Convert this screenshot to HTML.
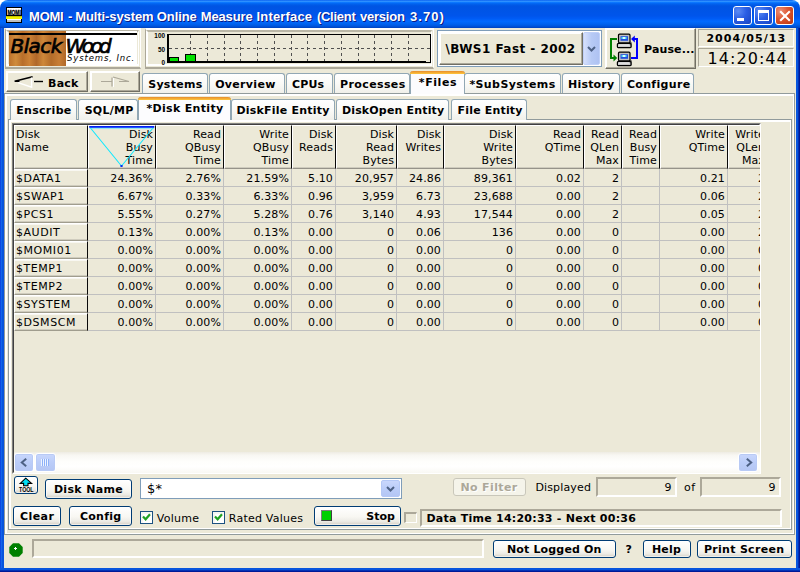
<!DOCTYPE html>
<html><head><meta charset="utf-8"><title>MOMI</title>
<style>
*{box-sizing:border-box;margin:0;padding:0}
html,body{width:800px;height:572px;overflow:hidden;background:#ECE9D8}
body{position:relative;font-family:"DejaVu Sans", "Liberation Sans", sans-serif;font-size:11px;color:#000;line-height:13px}
.a{position:absolute}
.t{position:absolute;white-space:nowrap;line-height:14px;z-index:3}
.b{font-weight:bold}
.btn{position:absolute;border:1px solid #003C74;border-radius:3px;background:linear-gradient(#fff 0%,#F8F7F2 55%,#ECEBE5 80%,#D6D0C5 100%);box-shadow:inset 0 0 0 1px rgba(255,255,255,.6)}
.cbtn{position:absolute;border:1px solid;border-color:#fff #716F64 #716F64 #fff;box-shadow:inset -1px -1px 0 #ACA899,inset 1px 1px 0 #fff;background:#ECE9D8}
.sunk{position:absolute;border:2px solid;border-color:#ACA899 #fff #fff #ACA899;background:#ECE9D8}
.fr{position:absolute;border:1px solid;border-color:#C5C2B2 #ACA899 #ACA899 #C5C2B2;box-shadow:inset 2px 2px 0 #fff,inset -1px -1px 0 #fff}
.tab{position:absolute;border:1px solid #91A7B4;border-bottom:none;border-radius:3px 3px 0 0;background:linear-gradient(#FFFFFF,#FAFAF7 50%,#F0F0EA)}
.tab.sel{background:#FCFCFE;border-top:none;z-index:2}
.tab.sel:before{content:"";position:absolute;left:-1px;right:-1px;top:0;height:3px;background:linear-gradient(#E68B2C,#FFC73C);border-radius:3px 3px 0 0}
.panel{position:absolute;border:1px solid;border-color:#919B9C;box-shadow:inset 2px 2px 0 #fff,inset -1px -1px 0 #fff;background:#ECE9D8}
.hc{position:absolute;top:125px;height:44px;border:1px solid;border-color:#fff #0A0A0A #96938A #fff;box-shadow:inset 0 -1px 0 #CFCCBE;background:#ECE9D8;text-align:right;padding:2px 2px 0 2px;line-height:13px;overflow:hidden;white-space:nowrap;letter-spacing:0.12px}
.rc{position:absolute;height:18px;border-right:1px solid #C0C0C0;border-bottom:1px solid #C0C0C0;text-align:right;padding:3px 2px 0 0;white-space:nowrap;overflow:hidden;letter-spacing:0.12px}
.fc{position:absolute;left:14px;width:74px;height:18px;border:1px solid;border-color:#fff #0A0A0A #A09D8E #fff;box-shadow:inset 0 1px 0 #F8F7F1,inset 0 -1px 0 #CFCCBE;padding:2px 0 0 1px;white-space:nowrap;letter-spacing:0.55px}
</style></head>
<body>
<div class="a" style="left:0;top:0;width:800px;height:10px;background:#fff"></div>
<div class="a" style="left:0;top:0;width:800px;height:28px;background:linear-gradient(#0058ee 0%,#3593ff 4%,#288eff 6%,#127dff 8%,#036ffc 10%,#0262ee 14%,#0057e5 20%,#0054e3 24%,#0055eb 56%,#005bf5 66%,#026afe 76%,#0062ef 86%,#0058E0 92%,#004CD0 97%,#0040B8 100%);border-radius:8px 8px 0 0"></div>
<div class="a" style="left:0;top:28px;width:4px;height:544px;background:linear-gradient(90deg,#0831D9,#166AEE 30%,#0855DD 60%,#0855DD)"></div>
<div class="a" style="left:796px;top:28px;width:4px;height:544px;background:linear-gradient(90deg,#0855DD,#0855DD 40%,#001EA0 75%,#00138C)"></div>
<div class="a" style="left:0;top:568px;width:800px;height:4px;background:linear-gradient(#0855DD,#0855DD 40%,#001EA0 75%,#00138C)"></div>
<svg class="a" style="left:6px;top:7px" width="17" height="17" viewBox="0 0 17 17"><rect x="0" y="0" width="16" height="16" fill="#000"/><rect x="1" y="1" width="14" height="7" fill="#fff"/><rect x="0" y="9" width="16" height="3" fill="#F0F000"/><path d="M0 9.6l1-.8 1 .8 1-.8 1 .8 1-.8 1 .8 1-.8 1 .8 1-.8 1 .8 1-.8 1 .8 1-.8 1 .8 1-.8 1 .8V8.5H0Z" fill="#000"/><rect x="1" y="12" width="14" height="3" fill="#C0C0C0"/><rect x="1" y="12" width="14" height="1" fill="#fff"/><text transform="translate(1.4 7.8) scale(0.65 1)" font-size="7.6" font-weight="bold" font-family="Liberation Sans,sans-serif" stroke="#000" stroke-width="0.3">MOMI</text></svg>
<div class="t" style="left:29.1px;top:9.1px;font-size:13px;letter-spacing:-0.271px;line-height:16px;font-weight:bold;font-family:Liberation Sans,sans-serif;color:#fff;text-shadow:1px 1px 0 #0A1883;">MOMI</div>
<div class="t" style="left:68.0px;top:9.1px;font-size:13px;letter-spacing:0.57px;line-height:16px;font-weight:bold;font-family:Liberation Sans,sans-serif;color:#fff;text-shadow:1px 1px 0 #0A1883;">-</div>
<div class="t" style="left:75.3px;top:9.1px;font-size:13px;letter-spacing:-0.105px;line-height:16px;font-weight:bold;font-family:Liberation Sans,sans-serif;color:#fff;text-shadow:1px 1px 0 #0A1883;">Multi-system</div>
<div class="t" style="left:156.8px;top:9.1px;font-size:13px;letter-spacing:-0.091px;line-height:16px;font-weight:bold;font-family:Liberation Sans,sans-serif;color:#fff;text-shadow:1px 1px 0 #0A1883;">Online</div>
<div class="t" style="left:200.7px;top:9.1px;font-size:13px;letter-spacing:-0.136px;line-height:16px;font-weight:bold;font-family:Liberation Sans,sans-serif;color:#fff;text-shadow:1px 1px 0 #0A1883;">Measure</div>
<div class="t" style="left:256.6px;top:9.1px;font-size:13px;letter-spacing:0.156px;line-height:16px;font-weight:bold;font-family:Liberation Sans,sans-serif;color:#fff;text-shadow:1px 1px 0 #0A1883;">Interface</div>
<div class="t" style="left:316.9px;top:9.1px;font-size:13px;letter-spacing:-0.263px;line-height:16px;font-weight:bold;font-family:Liberation Sans,sans-serif;color:#fff;text-shadow:1px 1px 0 #0A1883;">(Client</div>
<div class="t" style="left:360.0px;top:9.1px;font-size:13px;letter-spacing:-0.235px;line-height:16px;font-weight:bold;font-family:Liberation Sans,sans-serif;color:#fff;text-shadow:1px 1px 0 #0A1883;">version</div>
<div class="t" style="left:410.0px;top:9.1px;font-size:13px;letter-spacing:1.074px;line-height:16px;font-weight:bold;font-family:Liberation Sans,sans-serif;color:#fff;text-shadow:1px 1px 0 #0A1883;">3.70)</div>
<div class="a" style="left:733px;top:6px;width:19px;height:19px;border:1px solid #fff;border-radius:3px;background:radial-gradient(circle at 25% 25%,#5C8CF4,#2A5EE4 45%,#1A46C4 95%)"></div>
<div class="a" style="left:754px;top:6px;width:19px;height:19px;border:1px solid #fff;border-radius:3px;background:radial-gradient(circle at 25% 25%,#5C8CF4,#2A5EE4 45%,#1A46C4 95%)"></div>
<div class="a" style="left:775px;top:6px;width:19px;height:19px;border:1px solid #fff;border-radius:3px;background:radial-gradient(circle at 25% 25%,#EC9078,#DC5430 45%,#BE3812 95%)"></div>
<div class="a" style="left:737px;top:18px;width:7px;height:3px;background:#fff"></div>
<div class="a" style="left:757.5px;top:9.5px;width:11.5px;height:11px;border:1px solid #fff;border-top-width:3px"></div>
<svg class="a" style="left:778.5px;top:9.5px" width="12" height="12" viewBox="0 0 12 12"><path d="M1.2 1.2L10.8 10.8M10.8 1.2L1.2 10.8" stroke="#fff" stroke-width="2.1"/></svg>
<div class="a" style="left:5px;top:28px;width:136px;height:41px;border-style:solid;border-width:2px 1px 2px 1px;border-color:#fff #fff #ACA899 #ACA899"></div>
<div class="a" style="left:6px;top:30px;width:133px;height:36px;border-style:solid;border-width:2px 1px 2px 2px;border-color:#B9B6A6 #fff #fff #fff"></div>
<div class="a" style="left:9px;top:31px;width:128px;height:35px;background:#fff"></div>
<div class="a" style="left:9px;top:31px;width:57px;height:35px;background:linear-gradient(90deg,#BC722C,#D08C3C 12%,#B86E2A 24%,#CC8236 36%,#B0682A 48%,#CE883A 60%,#B46C2A 74%,#C87E36 88%,#B06828)"></div>
<div class="a" style="left:9px;top:33px;width:128px;height:2px;background:#000"></div>
<div class="t" style="left:10.5px;top:34.5px;font-size:20px;line-height:22px;font-style:italic;letter-spacing:-0.582px;-webkit-text-stroke:0.7px #000">Black</div>
<div class="t" style="left:65.5px;top:34.5px;font-size:20px;line-height:22px;font-style:italic;letter-spacing:-3.561px;-webkit-text-stroke:0.7px #000">Wood</div>
<div class="t" style="left:67px;top:52px;font-size:8.5px;line-height:12px;font-style:italic;letter-spacing:0.877px">Systems, Inc.</div>
<div class="a" style="left:145px;top:28px;width:289px;height:41px;border-style:solid;border-width:2px 1px 2px 1px;border-color:#fff #fff #ACA899 #ACA899"></div>
<div class="a" style="left:146px;top:30px;width:286px;height:36px;border-style:solid;border-width:2px 1px 2px 2px;border-color:#B9B6A6 #fff #fff #fff"></div>
<svg class="a" style="left:148px;top:31px" width="284" height="36" viewBox="0 0 284 36" font-family="Liberation Sans,sans-serif"><g stroke="#505050" stroke-width="1" stroke-dasharray="3 3"><line x1="42.5" y1="4" x2="42.5" y2="31"/><line x1="59.5" y1="4" x2="59.5" y2="31"/><line x1="76.5" y1="4" x2="76.5" y2="31"/><line x1="92.5" y1="4" x2="92.5" y2="31"/><line x1="109.5" y1="4" x2="109.5" y2="31"/><line x1="126.5" y1="4" x2="126.5" y2="31"/><line x1="143.5" y1="4" x2="143.5" y2="31"/><line x1="159.5" y1="4" x2="159.5" y2="31"/><line x1="176.5" y1="4" x2="176.5" y2="31"/><line x1="193.5" y1="4" x2="193.5" y2="31"/><line x1="210.5" y1="4" x2="210.5" y2="31"/><line x1="226.5" y1="4" x2="226.5" y2="31"/><line x1="243.5" y1="4" x2="243.5" y2="31"/><line x1="260.5" y1="4" x2="260.5" y2="31"/><line x1="21" y1="17.5" x2="282" y2="17.5"/></g><rect x="20.5" y="3.5" width="262" height="28" fill="none" stroke="#000" stroke-width="1"/><rect x="19" y="3" width="2" height="29" fill="#000"/><rect x="19" y="30" width="259" height="2" fill="#000"/><rect x="21.5" y="26.5" width="9" height="4" fill="#00E000" stroke="#000" stroke-width="1"/><rect x="37.5" y="23.5" width="10" height="7" fill="#00E000" stroke="#000" stroke-width="1"/><g font-size="7.6" font-weight="bold" text-anchor="end" transform="translate(17 0) scale(0.84 1)"><text x="0" y="6.9">100</text><text x="0" y="20.7">50</text><text x="0" y="34.4">0</text></g></svg>
<div class="a" style="left:437px;top:30px;width:165px;height:37px;border:1px solid #7F9DB9;background:#fff"></div>
<div class="cbtn" style="left:439px;top:32px;width:144px;height:33px"></div>
<div class="t" style="left:445.4px;top:41.3px;font-size:12px;letter-spacing:0.454px;line-height:16px;font-weight:bold;">\BWS1 Fast - 2002</div>
<div class="a" style="left:583px;top:32px;width:17px;height:33px;border-radius:2px;background:linear-gradient(90deg,#D6E0FC,#B7CAF5 50%,#AEC2F2);border:1px solid #C0D0F8"></div>
<svg class="a" style="left:586.5px;top:46px" width="9" height="7" viewBox="0 0 9 7"><path d="M1 1L4.5 4.5L8 1" fill="none" stroke="#4D6185" stroke-width="2"/></svg>
<div class="cbtn" style="left:605px;top:28px;width:91px;height:41px"></div>
<div class="t" style="left:644.1px;top:43.2px;font-size:11px;letter-spacing:0.104px;line-height:14px;font-weight:bold;">Pause...</div>
<svg class="a" style="left:608px;top:33px" width="34" height="36" viewBox="0 0 34 36"><path d="M9 6H3V25H6" fill="none" stroke="#008000" stroke-width="2"/><path d="M5.5 21.5L9.3 25L5.5 28.5Z" fill="#008000"/><path d="M26 6H29V25H23" fill="none" stroke="#0000FF" stroke-width="2"/><path d="M26.8 2.5L23 6L26.8 9.5Z" fill="#0000FF"/><rect x="10.5" y="1.2" width="11.5" height="8.6" rx="1" fill="#C0C0C0" stroke="#000" stroke-width="1.2"/><rect x="12.5" y="3.2" width="7.5" height="4.6" fill="#2050E0"/><rect x="13.5" y="4" width="5" height="2" fill="#60E8F0"/><rect x="15" y="4.2" width="2" height="1.6" fill="#fff"/><path d="M22 8 L23.6 9.5 V14.6 H22Z" fill="#404040"/><rect x="9.4" y="10.6" width="13.6" height="4" rx="0.8" fill="#C8C8C8" stroke="#000" stroke-width="1.2"/><rect x="10.5" y="11.4" width="11" height="1" fill="#fff"/><rect x="10.5" y="19.2" width="11.5" height="8.6" rx="1" fill="#C0C0C0" stroke="#000" stroke-width="1.2"/><rect x="12.5" y="21.2" width="7.5" height="4.6" fill="#2050E0"/><rect x="13.5" y="22" width="5" height="2" fill="#60E8F0"/><rect x="15" y="22.2" width="2" height="1.6" fill="#fff"/><path d="M22 26 L23.6 27.5 V32.6 H22Z" fill="#404040"/><rect x="9.4" y="28.6" width="13.6" height="4" rx="0.8" fill="#C8C8C8" stroke="#000" stroke-width="1.2"/><rect x="10.5" y="29.4" width="11" height="1" fill="#fff"/></svg>
<div class="sunk" style="left:698px;top:29px;width:96px;height:18px;border-width:1px"></div>
<div class="t" style="left:706.4px;top:32.2px;font-size:11px;letter-spacing:1.064px;line-height:14px;font-weight:bold;">2004/05/13</div>
<div class="sunk" style="left:698px;top:48px;width:96px;height:19px;border-width:1px"></div>
<div class="t" style="left:707.5px;top:48.5px;font-size:16px;letter-spacing:1.055px;line-height:20px;">14:20:44</div>
<div class="cbtn" style="left:6px;top:71px;width:82px;height:21px"></div>
<svg class="a" style="left:14px;top:75px" width="30" height="14" viewBox="0 0 30 14"><path d="M0.6 6.2L18.6 1.8M0.6 6.3H5.5" stroke="#000" stroke-width="1.6" fill="none"/><path d="M4 7.6L17.6 12.2V2.4" stroke="#fff" stroke-width="1.5" fill="none"/><path d="M20 6.5H29" stroke="#000" stroke-width="1.4"/></svg>
<div class="t" style="left:48.1px;top:77.4px;font-size:11px;letter-spacing:0.201px;line-height:14px;font-weight:bold;">Back</div>
<div class="cbtn" style="left:90px;top:71px;width:50px;height:21px"></div>
<svg class="a" style="left:100px;top:75px" width="30" height="14" viewBox="0 0 30 14"><path d="M1 6.5H12M12 2.5V11.5" stroke="#ACA899" stroke-width="1.2" fill="none"/><path d="M13 2L29 6.5H19" stroke="#ACA899" stroke-width="1.2" fill="none"/><path d="M13.5 3V12" stroke="#fff" stroke-width="1" fill="none"/></svg>
<div class="panel" style="left:4px;top:93px;width:791px;height:442px"></div>
<div class="tab" style="left:142px;top:73px;width:66px;height:20px"></div>
<div class="t" style="left:148.2px;top:78.2px;font-size:11px;letter-spacing:0.297px;line-height:14px;font-weight:bold;">Systems</div>
<div class="tab" style="left:209px;top:73px;width:76px;height:20px"></div>
<div class="t" style="left:215.2px;top:78.2px;font-size:11px;letter-spacing:0.31px;line-height:14px;font-weight:bold;">Overview</div>
<div class="tab" style="left:286px;top:73px;width:47px;height:20px"></div>
<div class="t" style="left:291.9px;top:78.2px;font-size:11px;letter-spacing:0.209px;line-height:14px;font-weight:bold;">CPUs</div>
<div class="tab" style="left:334px;top:73px;width:76px;height:20px"></div>
<div class="t" style="left:340.1px;top:78.2px;font-size:11px;letter-spacing:0.369px;line-height:14px;font-weight:bold;">Processes</div>
<div class="tab sel" style="left:410px;top:71px;width:55px;height:23px"></div>
<div class="t" style="left:418.8px;top:76.2px;font-size:11px;letter-spacing:0.597px;line-height:14px;font-weight:bold;">*Files</div>
<div class="tab" style="left:464px;top:73px;width:97px;height:20px"></div>
<div class="t" style="left:469.4px;top:78.2px;font-size:11px;letter-spacing:0.404px;line-height:14px;font-weight:bold;">*SubSystems</div>
<div class="tab" style="left:562px;top:73px;width:58px;height:20px"></div>
<div class="t" style="left:568.1px;top:78.2px;font-size:11px;letter-spacing:0.18px;line-height:14px;font-weight:bold;">History</div>
<div class="tab" style="left:621px;top:73px;width:73px;height:20px"></div>
<div class="t" style="left:626.9px;top:78.2px;font-size:11px;letter-spacing:0.333px;line-height:14px;font-weight:bold;">Configure</div>
<div class="panel" style="left:8px;top:119px;width:784px;height:411px"></div>
<div class="tab" style="left:10px;top:99px;width:67px;height:21px"></div>
<div class="t" style="left:16.2px;top:104.2px;font-size:11px;letter-spacing:0.307px;line-height:14px;font-weight:bold;">Enscribe</div>
<div class="tab" style="left:78px;top:99px;width:60px;height:21px"></div>
<div class="t" style="left:84.7px;top:104.2px;font-size:11px;letter-spacing:0.265px;line-height:14px;font-weight:bold;">SQL/MP</div>
<div class="tab sel" style="left:138px;top:97px;width:93px;height:23px"></div>
<div class="t" style="left:146.4px;top:102.2px;font-size:11px;letter-spacing:0.337px;line-height:14px;font-weight:bold;">*Disk Entity</div>
<div class="tab" style="left:231px;top:99px;width:104px;height:21px"></div>
<div class="t" style="left:236.4px;top:104.2px;font-size:11px;letter-spacing:0.219px;line-height:14px;font-weight:bold;">DiskFile Entity</div>
<div class="tab" style="left:336px;top:99px;width:113px;height:21px"></div>
<div class="t" style="left:341.9px;top:104.2px;font-size:11px;letter-spacing:0.169px;line-height:14px;font-weight:bold;">DiskOpen Entity</div>
<div class="tab" style="left:451px;top:99px;width:76px;height:21px"></div>
<div class="t" style="left:457.6px;top:104.2px;font-size:11px;letter-spacing:0.168px;line-height:14px;font-weight:bold;">File Entity</div>
<div class="a" style="left:12px;top:123px;width:749px;height:351px;border:1px solid;border-color:#808080 #fff #fff #808080"></div>
<div class="a" style="left:13px;top:124px;width:747px;height:349px;border:1px solid;border-color:#404040 transparent transparent #404040"></div>
<div class="a" style="left:14px;top:125px;width:746px;height:328px;overflow:hidden"><div class="a" style="left:-14px;top:-125px;width:800px;height:572px">
<div class="hc" style="left:14px;width:74px;text-align:left;padding-left:1px">Disk<br>Name</div>
<div class="hc" style="left:88px;width:68px">Disk<br>Busy<br>Time</div>
<div class="hc" style="left:156px;width:68px">Read<br>QBusy<br>Time</div>
<div class="hc" style="left:224px;width:68px">Write<br>QBusy<br>Time</div>
<div class="hc" style="left:292px;width:44px">Disk<br>Reads</div>
<div class="hc" style="left:336px;width:61px">Disk<br>Read<br>Bytes</div>
<div class="hc" style="left:397px;width:47px">Disk<br>Writes</div>
<div class="hc" style="left:444px;width:72px">Disk<br>Write<br>Bytes</div>
<div class="hc" style="left:516px;width:68px">Read<br>QTime</div>
<div class="hc" style="left:584px;width:38px">Read<br>QLen<br>Max</div>
<div class="hc" style="left:622px;width:38px">Read<br>Busy<br>Time</div>
<div class="hc" style="left:660px;width:68px">Write<br>QTime</div>
<div class="hc" style="left:728px;width:40px">Write<br>QLen<br>Max</div>
<svg class="a" style="left:88px;top:125px" width="68" height="44" viewBox="0 0 68 44"><path d="M2.5 3L33.5 41L65 3" fill="none" stroke="#10E8FF" stroke-width="1.1"/><path d="M1.5 3H66" stroke="#40E8FF" stroke-width="1"/><path d="M1.2 1.8H66.3" stroke="#0020F8" stroke-width="1.7"/><rect x="32.4" y="40" width="2.2" height="2" fill="#0030F0"/></svg>
<div class="fc" style="top:169px">$DATA1</div>
<div class="rc" style="left:88px;top:169px;width:68px">24.36%</div>
<div class="rc" style="left:156px;top:169px;width:68px">2.76%</div>
<div class="rc" style="left:224px;top:169px;width:68px">21.59%</div>
<div class="rc" style="left:292px;top:169px;width:44px">5.10</div>
<div class="rc" style="left:336px;top:169px;width:61px">20,957</div>
<div class="rc" style="left:397px;top:169px;width:47px">24.86</div>
<div class="rc" style="left:444px;top:169px;width:72px">89,361</div>
<div class="rc" style="left:516px;top:169px;width:68px">0.02</div>
<div class="rc" style="left:584px;top:169px;width:38px">2</div>
<div class="rc" style="left:622px;top:169px;width:38px"></div>
<div class="rc" style="left:660px;top:169px;width:68px">0.21</div>
<div class="rc" style="left:728px;top:169px;width:40px">2</div>
<div class="fc" style="top:187px">$SWAP1</div>
<div class="rc" style="left:88px;top:187px;width:68px">6.67%</div>
<div class="rc" style="left:156px;top:187px;width:68px">0.33%</div>
<div class="rc" style="left:224px;top:187px;width:68px">6.33%</div>
<div class="rc" style="left:292px;top:187px;width:44px">0.96</div>
<div class="rc" style="left:336px;top:187px;width:61px">3,959</div>
<div class="rc" style="left:397px;top:187px;width:47px">6.73</div>
<div class="rc" style="left:444px;top:187px;width:72px">23,688</div>
<div class="rc" style="left:516px;top:187px;width:68px">0.00</div>
<div class="rc" style="left:584px;top:187px;width:38px">2</div>
<div class="rc" style="left:622px;top:187px;width:38px"></div>
<div class="rc" style="left:660px;top:187px;width:68px">0.06</div>
<div class="rc" style="left:728px;top:187px;width:40px">2</div>
<div class="fc" style="top:205px">$PCS1</div>
<div class="rc" style="left:88px;top:205px;width:68px">5.55%</div>
<div class="rc" style="left:156px;top:205px;width:68px">0.27%</div>
<div class="rc" style="left:224px;top:205px;width:68px">5.28%</div>
<div class="rc" style="left:292px;top:205px;width:44px">0.76</div>
<div class="rc" style="left:336px;top:205px;width:61px">3,140</div>
<div class="rc" style="left:397px;top:205px;width:47px">4.93</div>
<div class="rc" style="left:444px;top:205px;width:72px">17,544</div>
<div class="rc" style="left:516px;top:205px;width:68px">0.00</div>
<div class="rc" style="left:584px;top:205px;width:38px">2</div>
<div class="rc" style="left:622px;top:205px;width:38px"></div>
<div class="rc" style="left:660px;top:205px;width:68px">0.05</div>
<div class="rc" style="left:728px;top:205px;width:40px">2</div>
<div class="fc" style="top:223px">$AUDIT</div>
<div class="rc" style="left:88px;top:223px;width:68px">0.13%</div>
<div class="rc" style="left:156px;top:223px;width:68px">0.00%</div>
<div class="rc" style="left:224px;top:223px;width:68px">0.13%</div>
<div class="rc" style="left:292px;top:223px;width:44px">0.00</div>
<div class="rc" style="left:336px;top:223px;width:61px">0</div>
<div class="rc" style="left:397px;top:223px;width:47px">0.06</div>
<div class="rc" style="left:444px;top:223px;width:72px">136</div>
<div class="rc" style="left:516px;top:223px;width:68px">0.00</div>
<div class="rc" style="left:584px;top:223px;width:38px">0</div>
<div class="rc" style="left:622px;top:223px;width:38px"></div>
<div class="rc" style="left:660px;top:223px;width:68px">0.00</div>
<div class="rc" style="left:728px;top:223px;width:40px">2</div>
<div class="fc" style="top:241px">$MOMI01</div>
<div class="rc" style="left:88px;top:241px;width:68px">0.00%</div>
<div class="rc" style="left:156px;top:241px;width:68px">0.00%</div>
<div class="rc" style="left:224px;top:241px;width:68px">0.00%</div>
<div class="rc" style="left:292px;top:241px;width:44px">0.00</div>
<div class="rc" style="left:336px;top:241px;width:61px">0</div>
<div class="rc" style="left:397px;top:241px;width:47px">0.00</div>
<div class="rc" style="left:444px;top:241px;width:72px">0</div>
<div class="rc" style="left:516px;top:241px;width:68px">0.00</div>
<div class="rc" style="left:584px;top:241px;width:38px">0</div>
<div class="rc" style="left:622px;top:241px;width:38px"></div>
<div class="rc" style="left:660px;top:241px;width:68px">0.00</div>
<div class="rc" style="left:728px;top:241px;width:40px">0</div>
<div class="fc" style="top:259px">$TEMP1</div>
<div class="rc" style="left:88px;top:259px;width:68px">0.00%</div>
<div class="rc" style="left:156px;top:259px;width:68px">0.00%</div>
<div class="rc" style="left:224px;top:259px;width:68px">0.00%</div>
<div class="rc" style="left:292px;top:259px;width:44px">0.00</div>
<div class="rc" style="left:336px;top:259px;width:61px">0</div>
<div class="rc" style="left:397px;top:259px;width:47px">0.00</div>
<div class="rc" style="left:444px;top:259px;width:72px">0</div>
<div class="rc" style="left:516px;top:259px;width:68px">0.00</div>
<div class="rc" style="left:584px;top:259px;width:38px">0</div>
<div class="rc" style="left:622px;top:259px;width:38px"></div>
<div class="rc" style="left:660px;top:259px;width:68px">0.00</div>
<div class="rc" style="left:728px;top:259px;width:40px">0</div>
<div class="fc" style="top:277px">$TEMP2</div>
<div class="rc" style="left:88px;top:277px;width:68px">0.00%</div>
<div class="rc" style="left:156px;top:277px;width:68px">0.00%</div>
<div class="rc" style="left:224px;top:277px;width:68px">0.00%</div>
<div class="rc" style="left:292px;top:277px;width:44px">0.00</div>
<div class="rc" style="left:336px;top:277px;width:61px">0</div>
<div class="rc" style="left:397px;top:277px;width:47px">0.00</div>
<div class="rc" style="left:444px;top:277px;width:72px">0</div>
<div class="rc" style="left:516px;top:277px;width:68px">0.00</div>
<div class="rc" style="left:584px;top:277px;width:38px">0</div>
<div class="rc" style="left:622px;top:277px;width:38px"></div>
<div class="rc" style="left:660px;top:277px;width:68px">0.00</div>
<div class="rc" style="left:728px;top:277px;width:40px">0</div>
<div class="fc" style="top:295px">$SYSTEM</div>
<div class="rc" style="left:88px;top:295px;width:68px">0.00%</div>
<div class="rc" style="left:156px;top:295px;width:68px">0.00%</div>
<div class="rc" style="left:224px;top:295px;width:68px">0.00%</div>
<div class="rc" style="left:292px;top:295px;width:44px">0.00</div>
<div class="rc" style="left:336px;top:295px;width:61px">0</div>
<div class="rc" style="left:397px;top:295px;width:47px">0.00</div>
<div class="rc" style="left:444px;top:295px;width:72px">0</div>
<div class="rc" style="left:516px;top:295px;width:68px">0.00</div>
<div class="rc" style="left:584px;top:295px;width:38px">0</div>
<div class="rc" style="left:622px;top:295px;width:38px"></div>
<div class="rc" style="left:660px;top:295px;width:68px">0.00</div>
<div class="rc" style="left:728px;top:295px;width:40px">0</div>
<div class="fc" style="top:313px">$DSMSCM</div>
<div class="rc" style="left:88px;top:313px;width:68px">0.00%</div>
<div class="rc" style="left:156px;top:313px;width:68px">0.00%</div>
<div class="rc" style="left:224px;top:313px;width:68px">0.00%</div>
<div class="rc" style="left:292px;top:313px;width:44px">0.00</div>
<div class="rc" style="left:336px;top:313px;width:61px">0</div>
<div class="rc" style="left:397px;top:313px;width:47px">0.00</div>
<div class="rc" style="left:444px;top:313px;width:72px">0</div>
<div class="rc" style="left:516px;top:313px;width:68px">0.00</div>
<div class="rc" style="left:584px;top:313px;width:38px">0</div>
<div class="rc" style="left:622px;top:313px;width:38px"></div>
<div class="rc" style="left:660px;top:313px;width:68px">0.00</div>
<div class="rc" style="left:728px;top:313px;width:40px">0</div>
</div></div>
<div class="a" style="left:14px;top:452px;width:746px;height:21px;background:linear-gradient(#EEECE3 0,#F8F7F2 15%,#FEFEFC 45%,#FFFFFF 70%,#F9F8F3 100%)"></div>
<div class="a" style="left:14px;top:453px;width:20px;height:19px;background:linear-gradient(#C9D7FC,#BBCDF9 50%,#B4C6F4);border:1px solid #fff;border-radius:3px;box-shadow:inset 0 0 0 1px #B8CAF5"></div>
<svg class="a" style="left:19.5px;top:458px" width="8" height="9" viewBox="0 0 8 9"><path d="M6.2 0.8L1.8 4.5L6.2 8.2" fill="none" stroke="#4D6185" stroke-width="2"/></svg>
<div class="a" style="left:35px;top:453px;width:21px;height:19px;background:linear-gradient(#C9D7FC,#BBCDF9 50%,#B4C6F4);border:1px solid #fff;border-radius:3px;box-shadow:inset 0 0 0 1px #B8CAF5"></div>
<div class="a" style="left:41px;top:459px;width:8px;height:7px;background:repeating-linear-gradient(90deg,#EEF4FE 0 1px,#8CB0F8 1px 2px)"></div>
<div class="a" style="left:738px;top:453px;width:20px;height:19px;background:linear-gradient(#C9D7FC,#BBCDF9 50%,#B4C6F4);border:1px solid #fff;border-radius:3px;box-shadow:inset 0 0 0 1px #B8CAF5"></div>
<svg class="a" style="left:744.5px;top:458px" width="8" height="9" viewBox="0 0 8 9"><path d="M1.8 0.8L6.2 4.5L1.8 8.2" fill="none" stroke="#4D6185" stroke-width="2"/></svg>
<div class="btn" style="left:14px;top:476px;width:24px;height:18px"></div>
<svg class="a" style="left:14px;top:476px" width="24" height="18" viewBox="0 0 24 18"><path d="M11.8 2.2L6.2 7.4H9.6V9.8H14V7.4H17.6Z" fill="#00E0F8" stroke="#000" stroke-width="1.1" stroke-linejoin="miter"/><text x="5" y="15.8" font-size="6.8" font-weight="bold" textLength="14.6" lengthAdjust="spacingAndGlyphs" font-family="Liberation Sans,sans-serif">TOOL</text></svg>
<div class="btn" style="left:45px;top:479px;width:87px;height:20px"></div>
<div class="t" style="left:53.9px;top:482.7px;font-size:11px;letter-spacing:0.339px;line-height:14px;font-weight:bold;">Disk Name</div>
<div class="a" style="left:140px;top:478px;width:262px;height:21px;border:1px solid #7F9DB9;background:#fff"></div>
<div class="t" style="left:147.1px;top:481.0px;font-size:13px;letter-spacing:0.164px;line-height:16px;">$*</div>
<div class="a" style="left:381px;top:480px;width:19px;height:17px;border-radius:2px;background:linear-gradient(#C9D7FC,#BBCDF9 50%,#B4C6F4);border:1px solid #B4C8F6"></div>
<svg class="a" style="left:386px;top:485.5px" width="9" height="7" viewBox="0 0 9 7"><path d="M1 1L4.5 4.5L8 1" fill="none" stroke="#4D6185" stroke-width="2"/></svg>
<div class="a" style="left:453px;top:478px;width:73px;height:18px;border:1px solid #C9C7BA;border-radius:3px;background:#F5F4EA"></div>
<div class="t" style="left:460.4px;top:481.2px;font-size:11px;letter-spacing:0.379px;line-height:14px;font-weight:bold;color:#ACA899;text-shadow:1px 1px 0 #fff;">No Filter</div>
<div class="t" style="left:535.4px;top:481.2px;font-size:11px;letter-spacing:0.156px;line-height:14px;">Displayed</div>
<div class="sunk" style="left:596px;top:477px;width:81px;height:20px"></div>
<div class="t" style="left:664.4px;top:481.2px;font-size:11px;letter-spacing:-0.299px;line-height:14px;">9</div>
<div class="t" style="left:683.9px;top:481.2px;font-size:11px;letter-spacing:0.549px;line-height:14px;">of</div>
<div class="sunk" style="left:700px;top:477px;width:81px;height:20px"></div>
<div class="t" style="left:768.4px;top:481.2px;font-size:11px;letter-spacing:-0.299px;line-height:14px;">9</div>
<div class="btn" style="left:13px;top:506px;width:48px;height:20px"></div>
<div class="t" style="left:19.9px;top:509.7px;font-size:11px;letter-spacing:0.459px;line-height:14px;font-weight:bold;">Clear</div>
<div class="btn" style="left:69px;top:506px;width:63px;height:20px"></div>
<div class="t" style="left:79.9px;top:509.7px;font-size:11px;letter-spacing:0.285px;line-height:14px;font-weight:bold;">Config</div>
<svg class="a" style="left:140px;top:511px" width="13" height="13" viewBox="0 0 13 13"><rect x="0.5" y="0.5" width="12" height="12" fill="#F6F6F2" stroke="#1C5180"/><rect x="3" y="3" width="9" height="9" fill="#fff"/><path d="M3 5.6L5.6 8.3L10 3.2" fill="none" stroke="#21A121" stroke-width="2.2"/></svg>
<div class="t" style="left:156.8px;top:512.2px;font-size:11px;letter-spacing:0.248px;line-height:14px;">Volume</div>
<svg class="a" style="left:212px;top:511px" width="13" height="13" viewBox="0 0 13 13"><rect x="0.5" y="0.5" width="12" height="12" fill="#F6F6F2" stroke="#1C5180"/><rect x="3" y="3" width="9" height="9" fill="#fff"/><path d="M3 5.6L5.6 8.3L10 3.2" fill="none" stroke="#21A121" stroke-width="2.2"/></svg>
<div class="t" style="left:228.8px;top:512.2px;font-size:11px;letter-spacing:0.222px;line-height:14px;">Rated Values</div>
<div class="btn" style="left:314px;top:506px;width:87px;height:20px"></div>
<div class="a" style="left:321px;top:510px;width:11px;height:11px;background:#00D000;border:1px solid;border-color:#808080 #404040 #404040 #808080"></div>
<div class="t" style="left:366.3px;top:509.7px;font-size:11px;letter-spacing:0.022px;line-height:14px;font-weight:bold;">Stop</div>
<div class="a" style="left:404px;top:512px;width:13px;height:11px;border-style:solid;border-width:2px 1px 1px 2px;border-color:#ACA899 #fff #fff #ACA899;background:#ECE9D8"></div>
<div class="sunk" style="left:420px;top:509px;width:362px;height:18px"></div>
<div class="t" style="left:426.4px;top:512.2px;font-size:11px;letter-spacing:0.252px;line-height:14px;font-weight:bold;">Data Time 14:20:33 - Next 00:36</div>
<svg class="a" style="left:9px;top:543px" width="14" height="14" viewBox="0 0 14 14"><path d="M4 0.3H10L13.7 4V10L10 13.7H4L0.3 10V4Z" fill="#008000"/><path d="M5 5.5H8M6.5 4V7" stroke="#fff" stroke-width="1"/></svg>
<div class="sunk" style="left:32px;top:539px;width:452px;height:19px"></div>
<div class="btn" style="left:493px;top:540px;width:123px;height:18px"></div>
<div class="t" style="left:506.9px;top:542.7px;font-size:11px;letter-spacing:0.168px;line-height:14px;font-weight:bold;">Not Logged On</div>
<div class="t" style="left:625.4px;top:542.7px;font-size:11px;letter-spacing:0.819px;line-height:14px;font-weight:bold;">?</div>
<div class="btn" style="left:643px;top:540px;width:48px;height:18px"></div>
<div class="t" style="left:651.9px;top:542.7px;font-size:11px;letter-spacing:0.222px;line-height:14px;font-weight:bold;">Help</div>
<div class="btn" style="left:697px;top:540px;width:95px;height:18px"></div>
<div class="t" style="left:703.9px;top:542.7px;font-size:11px;letter-spacing:0.304px;line-height:14px;font-weight:bold;">Print Screen</div>
</body></html>
